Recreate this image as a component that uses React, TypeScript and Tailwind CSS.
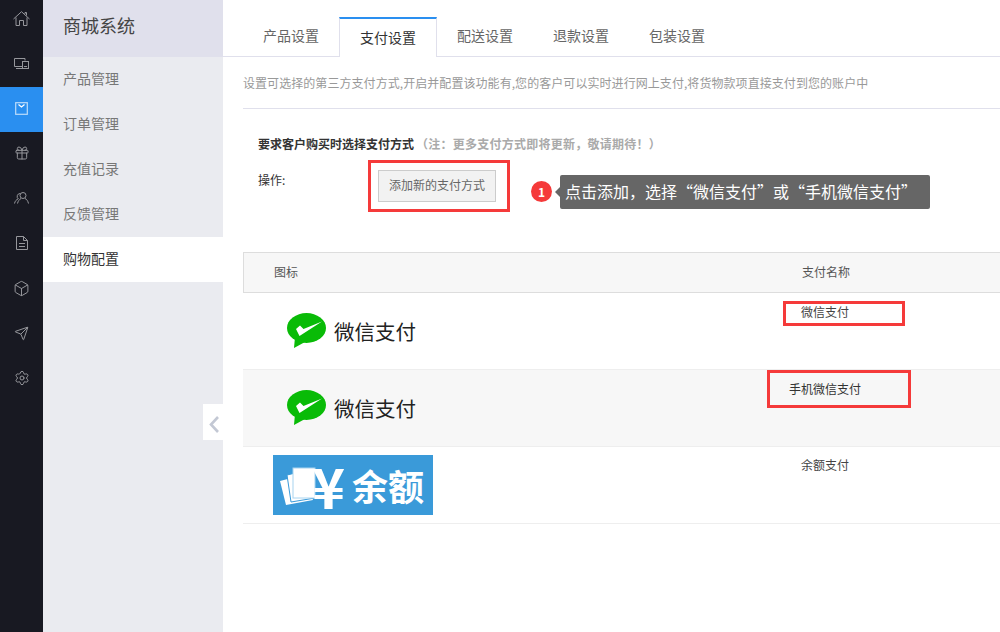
import React from 'react';
import { Gift, Box, Send, Settings } from 'lucide-react';

const menu = ['产品管理', '订单管理', '充值记录', '反馈管理', '购物配置'];
const tabs = ['产品设置', '支付设置', '配送设置', '退款设置', '包装设置'];
const railGrey = '#96979c';

function HomeIcon() {
  return (
    <svg width="17" height="15" viewBox="0 0 17 15" fill="none" stroke={railGrey} strokeWidth="1">
      <path d="M.5 8L8.500.7l8 7.300" />
      <path d="M12 3V1.500h1.500V4.500" />
      <path d="M3 6.500v8h3.500v-5h4v5H14v-8" />
    </svg>
  );
}

function DevicesIcon() {
  return (
    <svg width="15" height="11" viewBox="0 0 15 11" fill="none" stroke={railGrey} strokeWidth="1">
      <path d="M11 2.500V.5H.5v8H8" />
      <path d="M2 10.500h6" />
      <rect x="8.500" y="3.500" width="6" height="7" />
      <path d="M10 8.500h3" />
    </svg>
  );
}

function BagIcon() {
  return (
    <svg width="13" height="13" viewBox="0 0 13 13" fill="none" stroke="#bcdcfa" strokeWidth="1.200">
      <rect x="0.700" y="0.700" width="11.600" height="11.600" />
      <path d="M3.500 2.500l3 2.500 3-2.500" stroke="#fff" />
    </svg>
  );
}

function PeopleIcon() {
  return (
    <svg width="15" height="12" viewBox="0 0 15 12" fill="none" stroke={railGrey} strokeWidth="1">
      <circle cx="9" cy="3.500" r="3" />
      <path d="M6.300 1.500A3 3 0 0 0 4.500 7" />
      <path d="M.5 11.500C1 9 2.500 7.500 4 7" />
      <path d="M14.500 11.500C14 9 12.500 7 11 6.500" />
      <path d="M3.500 11.500C4 9 5.500 7.300 7 6.500" />
    </svg>
  );
}

function DocIcon() {
  return (
    <svg width="12" height="14" viewBox="0 0 12 14" fill="none" stroke={railGrey} strokeWidth="1">
      <path d="M.5.5h7l4 4v9H.5z" />
      <path d="M7.500.5v4h4" />
      <path d="M3 7.500h6M3 10.500h6" />
    </svg>
  );
}

function WechatLogo() {
  return (
    <div className="flex h-[35px] items-center gap-[7px]">
      <svg width="40" height="35" viewBox="0 0 40 35" className="shrink-0">
        <ellipse cx="19.500" cy="15" rx="19.500" ry="15" fill="#09bb07" />
        <path d="M8 24L7 35l11-6z" fill="#09bb07" />
        <path d="M9 16L13 12.500l3.500 3.500L35 8.500 12.500 23z" fill="#fff" />
      </svg>
      <span className="pt-[2px] text-[20.500px] leading-none text-[#222]">微信支付</span>
    </div>
  );
}

function BalanceLogo() {
  return (
    <div className="flex h-[60px] w-[160px] items-center bg-[#3a9ad9] text-white">
      <svg width="45" height="60" viewBox="0 0 45 60" className="shrink-0">
        <path d="M7 26l6 24 27-5-10-25z" fill="#fff" />
        <path d="M14 20l4 27 24-4-7-28z" fill="#fff" stroke="#3a9ad9" />
        <rect x="20" y="13" width="22" height="30" fill="#fff" stroke="#a8d4f0" />
      </svg>
      <span className="ml-[-6px] text-[56px] leading-none font-bold">¥</span>
      <span className="ml-[7px] text-[36px] leading-none font-bold">余额</span>
    </div>
  );
}

export default function App() {
  return (
    <div className="flex h-[632px] w-[1000px] overflow-hidden bg-white font-['Noto_Sans_CJK_SC','Liberation_Sans',sans-serif]">
      {/* Icon rail */}
      <div className="flex w-[43px] shrink-0 flex-col bg-[#181922]">
        <div className="flex h-[42px] items-center justify-center pb-[5px]"><HomeIcon /></div>
        <div className="flex h-[45px] items-center justify-center pb-[3px]"><DevicesIcon /></div>
        <div className="flex h-[45px] items-center justify-center bg-[#2a8ff0] pb-[3px]"><BagIcon /></div>
        <div className="flex h-[45px] items-center justify-center pb-[3px]"><Gift size={16} strokeWidth={1.5} color={railGrey} /></div>
        <div className="flex h-[45px] items-center justify-center pb-[3px]"><PeopleIcon /></div>
        <div className="flex h-[45px] items-center justify-center pb-[3px]"><DocIcon /></div>
        <div className="flex h-[45px] items-center justify-center pb-[3px]"><Box size={17} strokeWidth={1.4} color={railGrey} /></div>
        <div className="flex h-[45px] items-center justify-center pb-[3px]"><Send size={15} strokeWidth={1.6} color={railGrey} /></div>
        <div className="flex h-[45px] items-center justify-center pb-[3px]"><Settings size={16} strokeWidth={1.5} color={railGrey} /></div>
      </div>

      {/* Sub menu */}
      <div className="relative flex w-[180px] shrink-0 flex-col bg-[#eaebf0]">
        <div className="flex h-[57px] items-center bg-[#e0e0ec] pb-[7px] pl-[20px] text-[18px] text-[#444]">商城系统</div>
        {menu.map((m, i) => (
          <div
            key={m}
            className={i === 4
              ? 'flex h-[45px] items-center bg-white pb-[2px] pl-[20px] text-[14px] text-[#333]'
              : 'flex h-[45px] items-center pb-[2px] pl-[20px] text-[14px] text-[#777]'}
          >
            {m}
          </div>
        ))}
        <div className="absolute top-[404px] right-0 flex h-[36px] w-[20px] items-center justify-center bg-white pt-[4px] pl-[2px]">
          <svg width="10" height="17" viewBox="0 0 10 17" fill="none" stroke="#c3c8d4" strokeWidth="2.600">
            <path d="M9 1L2 8.500 9 16" />
          </svg>
        </div>
      </div>

      {/* Main */}
      <div className="flex min-w-0 flex-1 flex-col">
        <div className="flex h-[57px] items-end border-b border-[#e0e0ec] pl-[20px]">
          {tabs.map((t, i) => (
            <div
              key={t}
              className={i === 1
                ? 'mb-[-1px] flex h-[40px] w-[98px] items-center justify-center border-x border-t-2 border-x-[#e0e0ec] border-t-[#2a8ff0] bg-white pb-[2px] text-[14px] text-[#333]'
                : 'flex h-[39px] w-[96px] items-center justify-center pb-[2px] text-[14px] text-[#666]'}
            >
              {t}
            </div>
          ))}
        </div>

        <div className="ml-[20px] flex h-[52px] items-center border-b border-[#e0e0ec] text-[12px] tracking-[0.06px] text-[#999]">
          设置可选择的第三方支付方式,开启并配置该功能有,您的客户可以实时进行网上支付,将货物款项直接支付到您的账户中
        </div>

        <div className="mt-[27px] ml-[35px] text-[12px] leading-[16px]">
          <span className="font-bold text-[#333]">要求客户购买时选择支付方式</span>
          <span className="ml-[2px] font-bold tracking-[0.25px] text-[#aaa]">（注：更多支付方式即将更新，敬请期待！）</span>
        </div>

        <div className="mt-[8px] ml-[35px] flex items-start">
          <div className="mt-[12px] w-[110px] text-[12px] leading-[16px] text-[#333]">操作:</div>
          <div className="border-[3px] border-[#f53a3a] py-[7px] pr-[11px] pl-[7px]">
            <div className="flex h-[32px] w-[118px] items-center justify-center border border-[#ccc] bg-[#f2f2f2] pb-[2px] text-[12px] text-[#666]">添加新的支付方式</div>
          </div>
          <div className="mt-[21px] ml-[21px] flex h-[21px] w-[21px] items-center justify-center rounded-full bg-[#f53a3a] text-[12px] font-bold text-white">1</div>
          <div className="relative mt-[15px] ml-[8px] flex h-[34px] w-[370px] items-center rounded-[2px] bg-[#666] pb-[2px] pl-[5px] text-[16px] whitespace-nowrap text-white">
            <span className="absolute top-[12px] left-[-5px] h-0 w-0 border-y-[5px] border-r-[5px] border-y-transparent border-r-[#666]" />
            点击添加，选择“微信支付”或“手机微信支付”
          </div>
        </div>

        <div className="mt-[40px] ml-[20px] text-[12px]">
          <div className="flex h-[41px] items-center border-y border-l border-[#ddd] bg-[#f7f7f7] pb-[2px] text-[#555]">
            <div className="w-[481px] pl-[30px]">图标</div>
            <div className="w-[202px] text-center">支付名称</div>
          </div>
          <div className="flex h-[77px] border-b border-[#eee]">
            <div className="w-[482px] pt-[20px] pl-[44px]"><WechatLogo /></div>
            <div className="relative w-[200px] pt-[12px] text-center leading-[14px] text-[#444]">
              微信支付
              <span className="absolute top-[8px] left-[58px] h-[25px] w-[122px] border-[3px] border-[#f53a3a]" />
            </div>
          </div>
          <div className="flex h-[77px] border-b border-[#eee] bg-[#f7f7f7]">
            <div className="w-[482px] pt-[20px] pl-[44px]"><WechatLogo /></div>
            <div className="relative w-[200px] pt-[12px] text-center leading-[14px] text-[#333]">
              手机微信支付
              <span className="absolute top-0 left-[42px] h-[38px] w-[144px] border-[3px] border-[#f53a3a]" />
            </div>
          </div>
          <div className="flex h-[77px] border-b border-[#eee]">
            <div className="flex w-[482px] items-center pl-[30px]"><BalanceLogo /></div>
            <div className="w-[200px] pt-[11px] text-center leading-[14px] text-[#444]">余额支付</div>
          </div>
        </div>
      </div>
    </div>
  );
}
